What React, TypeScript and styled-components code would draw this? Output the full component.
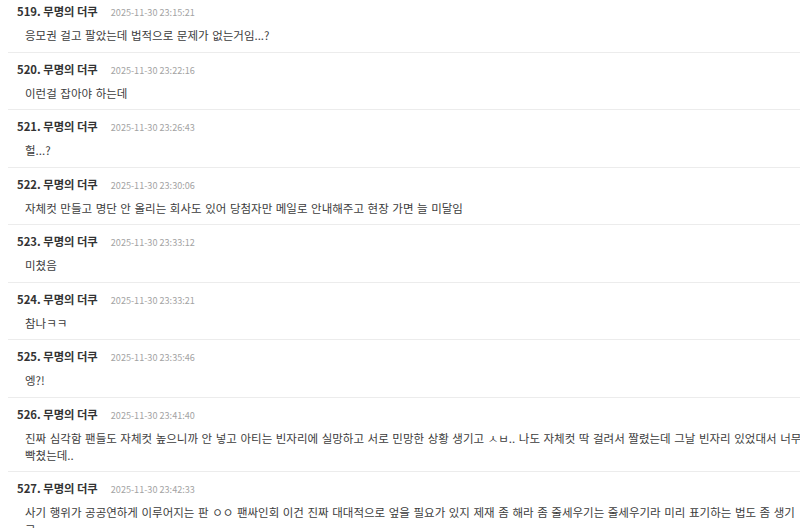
import React from "react";
import styled, { createGlobalStyle } from "styled-components";

const GlobalStyle = createGlobalStyle`
  html, body {
    margin: 0;
    padding: 0;
    background: #fff;
    overflow: hidden;
  }
  body {
    font-family: "Noto Sans CJK KR", "Noto Sans", sans-serif;
  }
`;

const List = styled.ul`
  list-style: none;
  margin: 0 0 0 8px;
  padding: 0;
  width: 797px;
`;

const Item = styled.li`
  border-top: 1px solid #ececec;
  padding: 8px 0 7.5px 9px;

  &:first-child {
    border-top: none;
    padding-top: 3px;
  }
`;

const Header = styled.div`
  display: flex;
  align-items: baseline;
  gap: 13px;
  height: 16px;
  line-height: 16px;
`;

const Author = styled.span`
  font-size: 11.3px;
  font-weight: 700;
  color: #333;
`;

const Date = styled.span`
  font-size: 9.1px;
  color: #a3a3a3;
`;

const Body = styled.p`
  margin: 8px 0 0 8px;
  font-size: 11.5px;
  line-height: 17px;
  word-spacing: 1px;
  color: #3c3c3c;
`;

interface Comment {
  no: number;
  date: string;
  text: string;
}

const comments: Comment[] = [
  { no: 519, date: "2025-11-30 23:15:21", text: "응모권 걸고 팔았는데 법적으로 문제가 없는거임...?" },
  { no: 520, date: "2025-11-30 23:22:16", text: "이런걸 잡아야 하는데" },
  { no: 521, date: "2025-11-30 23:26:43", text: "헐...?" },
  {
    no: 522,
    date: "2025-11-30 23:30:06",
    text: "자체컷 만들고 명단 안 올리는 회사도 있어 당첨자만 메일로 안내해주고 현장 가면 늘 미달임",
  },
  { no: 523, date: "2025-11-30 23:33:12", text: "미쳤음" },
  { no: 524, date: "2025-11-30 23:33:21", text: "참나ㅋㅋ" },
  { no: 525, date: "2025-11-30 23:35:46", text: "엥?!" },
  {
    no: 526,
    date: "2025-11-30 23:41:40",
    text: "진짜 심각함 팬들도 자체컷 높으니까 안 넣고 아티는 빈자리에 실망하고 서로 민망한 상황 생기고 ㅅㅂ.. 나도 자체컷 딱 걸려서 짤렸는데 그날 빈자리 있었대서 너무 빡쳤는데..",
  },
  {
    no: 527,
    date: "2025-11-30 23:42:33",
    text: "사기 행위가 공공연하게 이루어지는 판 ㅇㅇ 팬싸인회 이건 진짜 대대적으로 엎을 필요가 있지 제재 좀 해라 좀 줄세우기는 줄세우기라 미리 표기하는 법도 좀 생기고",
  },
];

const App: React.FC = () => {
  return (
    <>
      <GlobalStyle />
      <List>
        {comments.map((c) => (
          <Item key={c.no}>
            <Header>
              <Author>{c.no}. 무명의 더쿠</Author>
              <Date>{c.date}</Date>
            </Header>
            <Body>{c.text}</Body>
          </Item>
        ))}
      </List>
    </>
  );
};

export default App;
